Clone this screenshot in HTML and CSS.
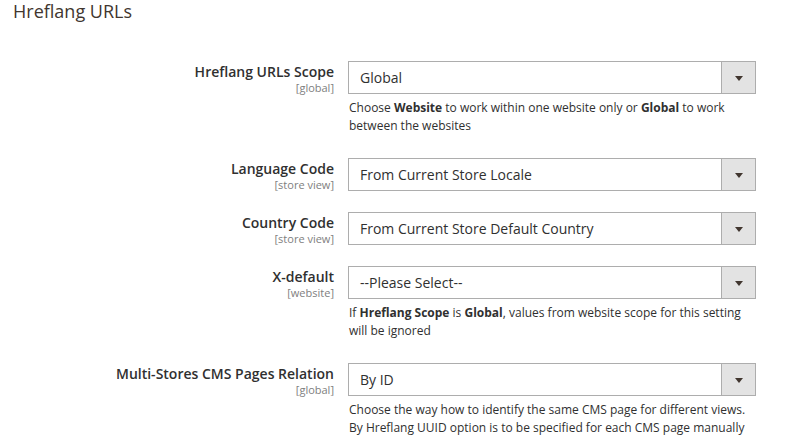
FILE: index.html
```html
<!DOCTYPE html>
<html>
<head>
<meta charset="utf-8">
<link rel="stylesheet" href="styles.css">
</head>
<body>
<div class="page">
  <h2 class="title">Hreflang URLs</h2>
  <div class="form">
    <div class="row">
      <div class="label"><span class="name">Hreflang URLs Scope</span><span class="scope">[global]</span></div>
      <div class="control">
        <div class="select"><span class="value">Global</span><span class="arrow"></span></div>
        <div class="note">Choose <b>Website</b> to work within one website only or <b>Global</b> to work between the websites</div>
      </div>
    </div>
    <div class="row">
      <div class="label"><span class="name">Language Code</span><span class="scope">[store view]</span></div>
      <div class="control">
        <div class="select"><span class="value">From Current Store Locale</span><span class="arrow"></span></div>
      </div>
    </div>
    <div class="row">
      <div class="label"><span class="name">Country Code</span><span class="scope">[store view]</span></div>
      <div class="control">
        <div class="select"><span class="value">From Current Store Default Country</span><span class="arrow"></span></div>
      </div>
    </div>
    <div class="row">
      <div class="label"><span class="name">X-default</span><span class="scope">[website]</span></div>
      <div class="control">
        <div class="select"><span class="value">--Please Select--</span><span class="arrow"></span></div>
        <div class="note">If <b>Hreflang Scope</b> is <b>Global</b>, values from website scope for this setting will be ignored</div>
      </div>
    </div>
    <div class="row">
      <div class="label"><span class="name">Multi-Stores CMS Pages Relation</span><span class="scope">[global]</span></div>
      <div class="control">
        <div class="select"><span class="value">By ID</span><span class="arrow"></span></div>
        <div class="note">Choose the way how to identify the same CMS page for different views. By Hreflang UUID option is to be specified for each CMS page manually</div>
      </div>
    </div>
  </div>
</div>
</body>
</html>
```

FILE: styles.css
```css
* { box-sizing: border-box; }
html, body { margin: 0; padding: 0; background: #fff; }
body { font-family: "Open Sans", "Liberation Sans", sans-serif; color: #303030; }
.page { padding: 0 0 0 13px; width: 800px; }
.title {
  margin: 0;
  font-size: 18px;
  font-weight: 400;
  color: #41362f;
  line-height: 22px;
}
.form { padding-top: 39px; }
.row { display: flex; margin-bottom: 21px; }
.label {
  width: 321px;
  display: flex;
  flex-direction: column;
  align-items: flex-end;
  padding-top: 2px;
}
.name { font-size: 14px; font-weight: 600; line-height: 18px; color: #303030; }
.scope { font-size: 11px; line-height: 13px; color: #808080; }
.control { margin-left: 14px; width: 408px; }
.select {
  height: 33px;
  border: 1px solid #adadad;
  display: flex;
  align-items: center;
  background: #fff;
}
.value { flex: 1; padding-left: 11px; font-size: 14px; color: #303030; line-height: 31px; }
.arrow {
  width: 34px;
  height: 31px;
  background: #e3e3e3;
  border-left: 1px solid #adadad;
  position: relative;
}
.arrow::after {
  content: "";
  position: absolute;
  left: 13px;
  top: 14px;
  border-left: 4px solid transparent;
  border-right: 4px solid transparent;
  border-top: 5px solid #41362f;
}
.note {
  margin-top: 5px;
  font-size: 12px;
  line-height: 18px;
  color: #303030;
  padding-left: 1px;
  margin-bottom: 2px;
}
.note b { font-weight: 700; }
```
